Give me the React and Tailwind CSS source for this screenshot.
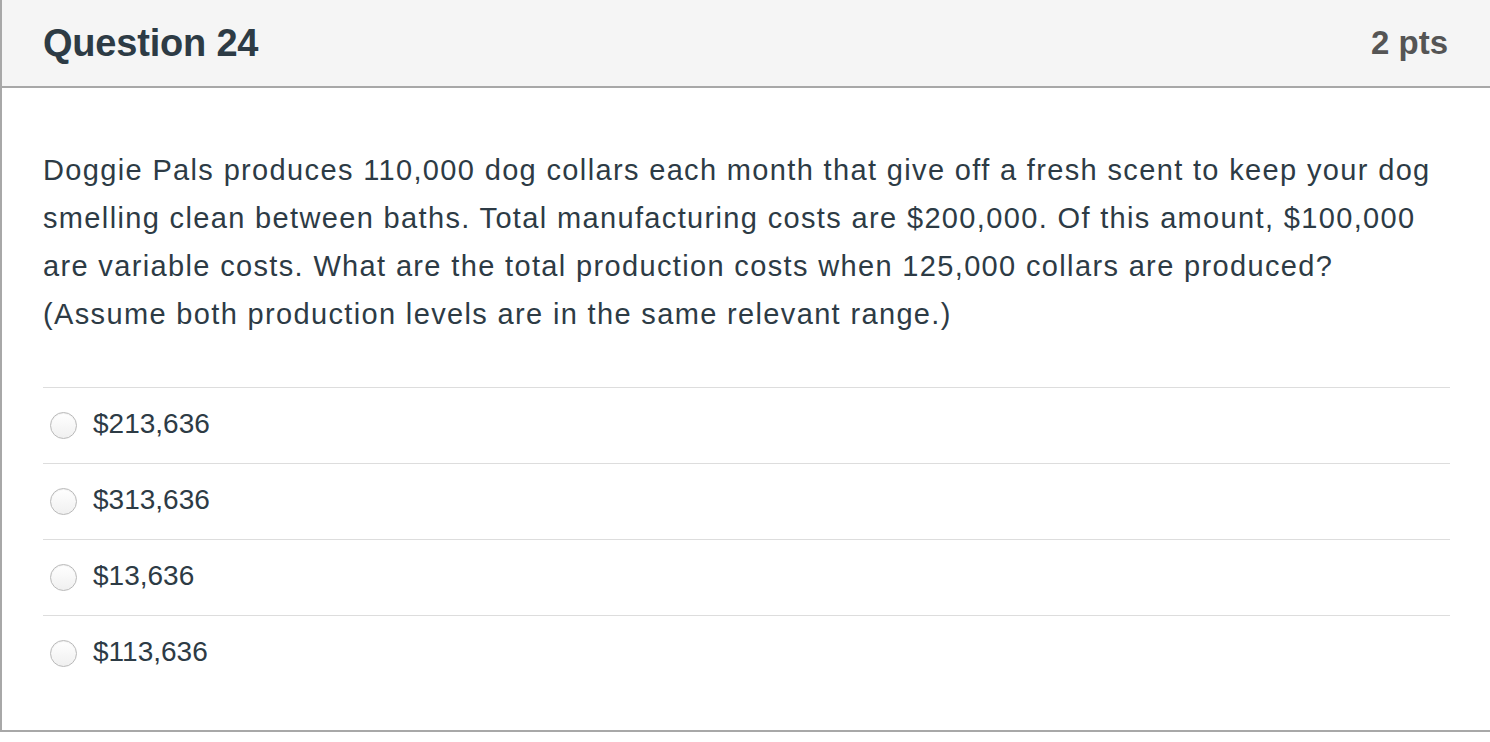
const answers = ["$213,636", "$313,636", "$13,636", "$113,636"];

export default function App() {
  return (
    <div className="w-[1490px] h-[742px] bg-white overflow-hidden" style={{ fontFamily: '"Liberation Sans", Arial, sans-serif' }}>
      <div className="border-l-2 border-b-2 border-[#a8a8a8] h-[732px] flex flex-col">
        {/* Header */}
        <div className="h-[88px] shrink-0 bg-[#f5f5f5] border-b-2 border-[#a8a8a8] flex items-center justify-between pl-[41px] pr-[42px]">
          <h2 className="text-[38px] font-bold text-[#2d3b45] tracking-[-0.2px]">Question 24</h2>
          <span className="text-[33px] font-bold text-[#555555]">2 pts</span>
        </div>

        {/* Body */}
        <div className="pl-[41px] pr-[40px] pt-[58px]">
          <p className="text-[29px] leading-[48px] tracking-[1.35px] text-[#2d3b45] whitespace-nowrap">
            Doggie Pals produces 110,000 dog collars each month that give off a fresh scent to keep your dog
            <br />
            smelling clean between baths. Total manufacturing costs are $200,000. Of this amount, $100,000
            <br />
            are variable costs. What are the total production costs when 125,000 collars are produced?
            <br />
            (Assume both production levels are in the same relevant range.)
          </p>

          <div className="mt-[49px]">
            {answers.map((a) => (
              <label key={a} className="h-[76px] border-t border-[#dddddd] flex items-center gap-[16px] pl-[7px]">
                <span className="w-[27px] h-[27px] rounded-full border border-[#b9b9b9] bg-gradient-to-b from-white to-[#f0f0f0] shadow-[inset_0_1px_1px_rgba(0,0,0,0.06)]" />
                <span className="text-[28px] text-[#2d3b45] -mt-[3px]">{a}</span>
              </label>
            ))}
          </div>
        </div>
      </div>
    </div>
  );
}
